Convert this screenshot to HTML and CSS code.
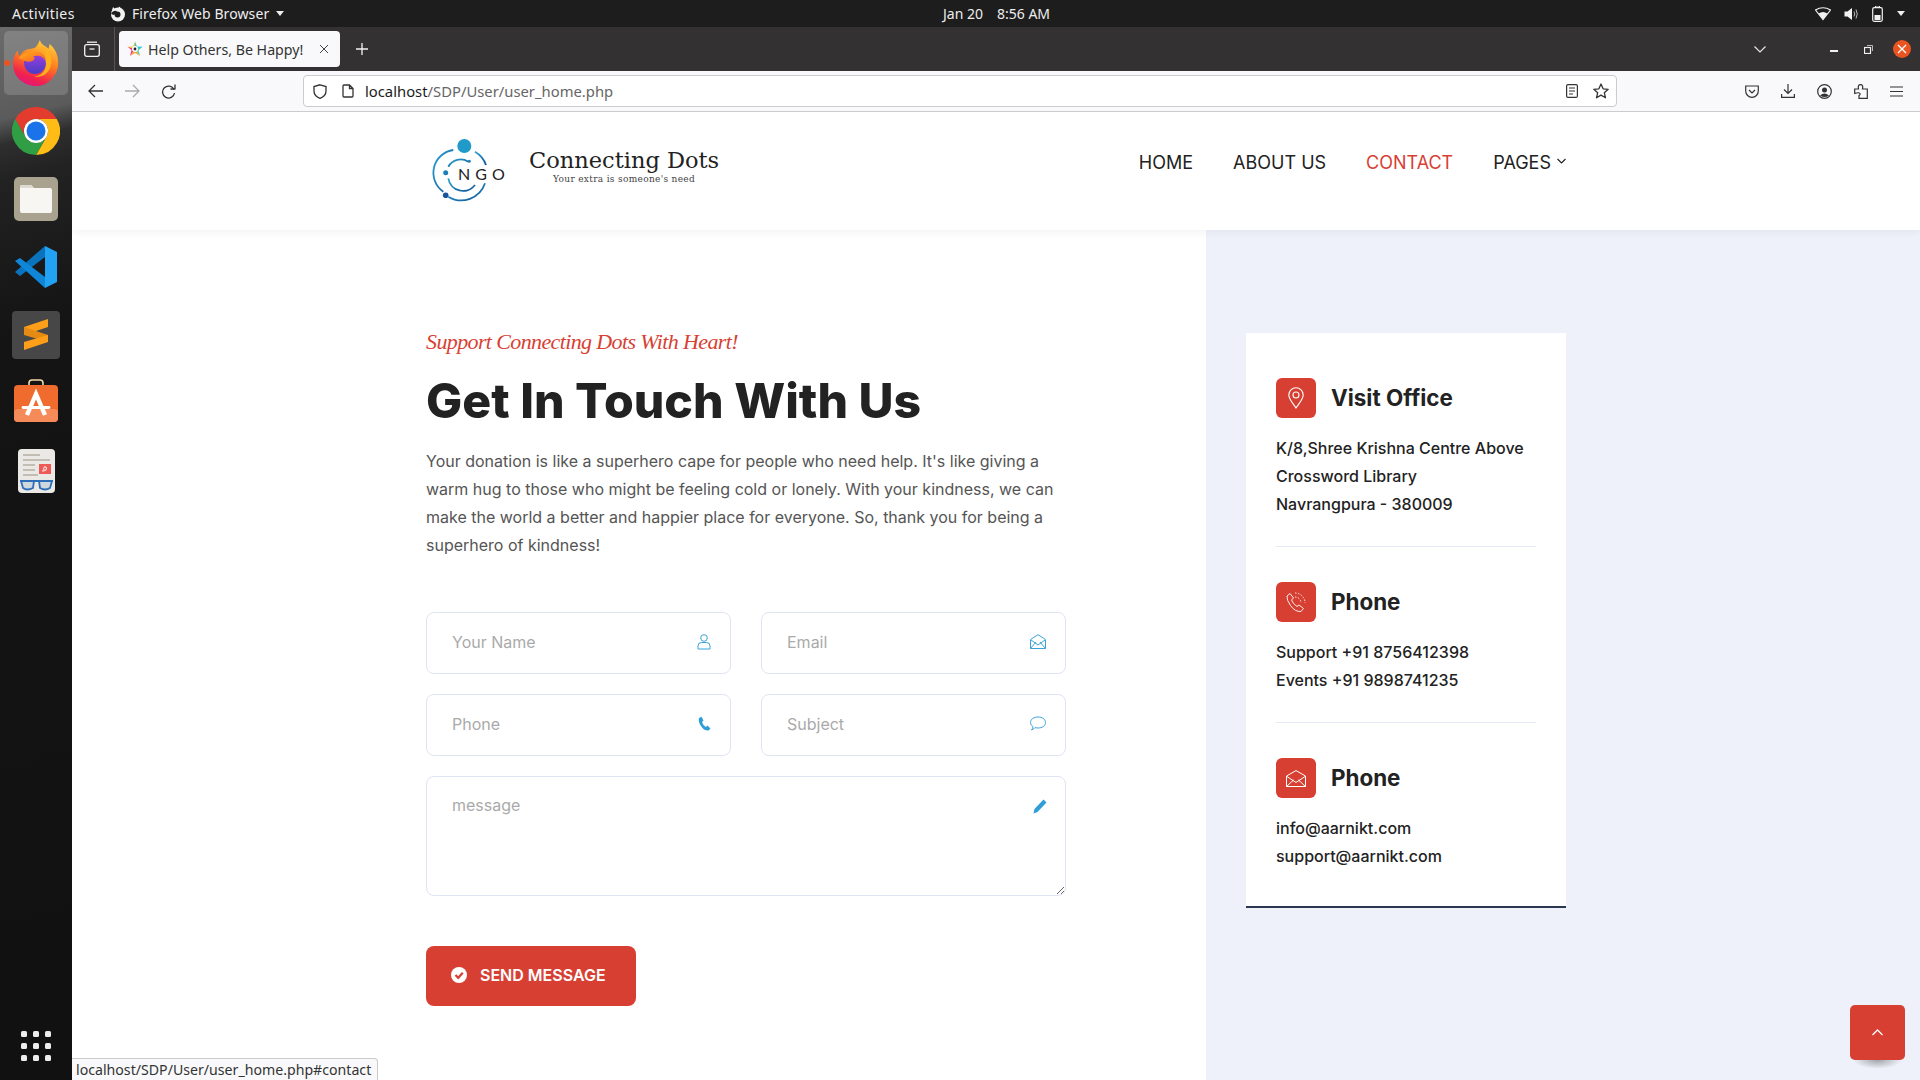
FILE: index.html
```html
<!DOCTYPE html>
<html lang="en">
<head>
<meta charset="utf-8">
<title>Help Others, Be Happy!</title>
<link rel="stylesheet" href="styles.css">
</head>
<body>
<div class="desktop">
  <div class="topbar">
    <div class="top-left">
      <span class="activities">Activities</span>
      <svg class="ff-mono" width="16" height="16" viewBox="0 0 16 16"><circle cx="8" cy="8.5" r="7" fill="#f2f2f2"/><circle cx="7.5" cy="8.5" r="3" fill="#1d1d1d"/><path d="M1.5 6 L5 3 L3 1 Z M9 0.5 L12 3 L8 4 Z" fill="#f2f2f2"/><path d="M1 8 Q3 4 7 5 L4 9 Z" fill="#1d1d1d"/></svg>
      <span class="appname">Firefox Web Browser</span>
      <span class="caret"></span>
    </div>
    <div class="clock"><span>Jan 20</span><span>8:56 AM</span></div>
    <div class="tray">
      <svg width="16" height="14" viewBox="0 0 16 14"><path d="M0.5 3 Q8 -1.5 15.5 3 L8 12.5 Z" fill="none" stroke="#f2f2f2" stroke-width="1.2"/><path d="M3.5 6.5 Q8 3.5 12.5 6.5 L8 12.5 Z" fill="#f2f2f2"/></svg>
      <svg width="15" height="14" viewBox="0 0 15 14"><path d="M0.5 4.5 H3.5 L8 1 V13 L3.5 9.5 H0.5 Z" fill="#f2f2f2"/><path d="M10 4.5 Q11.5 7 10 9.5 M12 2.5 Q14.5 7 12 11.5" stroke="#bbb" fill="none"/></svg>
      <svg width="11" height="16" viewBox="0 0 11 16"><path d="M3.5 1 V0 H7.5 V1" stroke="#f2f2f2"/><rect x="0.7" y="1.7" width="9.6" height="13.6" rx="1.5" fill="none" stroke="#f2f2f2" stroke-width="1.2"/><rect x="2.5" y="9" width="6" height="5" fill="#f2f2f2"/></svg>
      <span class="caret"></span>
    </div>
  </div>
  <div class="workspace">
    <nav class="dock">
      <div class="dock-item active">
        <span class="run-dot"></span>
        <svg width="46" height="46" viewBox="0 0 48 48"><defs><linearGradient id="ffa" x1="0.7" y1="0" x2="0.3" y2="1"><stop offset="0" stop-color="#ffd23a"/><stop offset=".45" stop-color="#ff7a1f"/><stop offset=".8" stop-color="#f0224e"/><stop offset="1" stop-color="#e3147e"/></linearGradient><linearGradient id="ffb" x1="0.5" y1="0" x2="0.5" y2="1"><stop offset="0" stop-color="#a33fe0"/><stop offset="1" stop-color="#4a3bc4"/></linearGradient><linearGradient id="ffc" x1="0" y1="0" x2="1" y2="1"><stop offset="0" stop-color="#ffb21e"/><stop offset="1" stop-color="#ff5a1f"/></linearGradient></defs><path d="M28 0 C29 4 33 6 37 9 C38 7 38 5 38 4 C44 9 48 17 47 26 C46 38 36 48 24 48 C11 48 0 38 0 25 C0 20 2 14 5 11 C5 14 6 16 7 17 C9 12 14 9 19 9 C22 9 25 8 28 0 Z" fill="url(#ffa)"/><circle cx="23" cy="24" r="11.5" fill="url(#ffb)"/><path d="M6 19 C9 14 15 13 22 12 C29 12 33 16 34 22 C30 16 26 16 21 17 C24 19 22 21 20 22 C16 24 12 22 6 19 Z" fill="url(#ffc)"/><path d="M34 22 C36 30 31 38 22 38 C30 40 41 34 40 20 C39 14 35 9 30 7 C34 11 34 17 34 22 Z" fill="#ffb21e"/></svg>
      </div>
      <div class="dock-item">
        <svg width="48" height="48" viewBox="0 0 48 48"><path d="M3.2 12 A24 24 0 0 1 44.8 12 H24 A12 12 0 0 0 13.6 30 Z" fill="#e33b2e"/><path d="M44.8 12 A24 24 0 0 1 24 48 L34.4 30 A12 12 0 0 0 24 12 Z" fill="#fdbd16"/><path d="M24 48 A24 24 0 0 1 3.2 12 L13.6 30 A12 12 0 0 0 34.4 30 Z" fill="#2f9e44"/><circle cx="24" cy="24" r="12" fill="#fff"/><circle cx="24" cy="24" r="9.5" fill="#1a73e8"/></svg>
      </div>
      <div class="dock-item">
        <svg width="44" height="44" viewBox="0 0 44 44"><rect width="44" height="44" rx="5" fill="#a8a28f"/><path d="M6 10 a2 2 0 0 1 2-2 H17 L20 11 H36 a2 2 0 0 1 2 2 V34 a2 2 0 0 1-2 2 H8 a2 2 0 0 1-2-2 Z" fill="#f8f6f3"/><path d="M6 10 a2 2 0 0 1 2-2 H17 L20 11 H6 Z" fill="#dedbd2"/></svg>
      </div>
      <div class="dock-item">
        <svg width="42" height="42" viewBox="0 0 42 42"><path d="M30 0 V11 L5 30 L0 26 Z" fill="#0a73bd"/><path d="M0 15 L5 12 L30 31 V42 Z" fill="#0f86d8"/><path d="M30 0 L42 6 V36 L30 42 Z" fill="#22a2f2"/></svg>
      </div>
      <div class="dock-item">
        <svg width="48" height="48" viewBox="0 0 48 48"><rect width="48" height="48" rx="4" fill="#474747"/><path d="M12 16 L36 8 V16 L12 24 Z" fill="#ff9e18"/><path d="M12 24 V16 L36 24 V31 Z" fill="#e58a12"/><path d="M12 31 L36 24 V31 L12 39 Z" fill="#ff9e18"/></svg>
      </div>
      <div class="dock-item">
        <svg class="store-icon" width="44" height="44" viewBox="0 0 44 44"><path d="M15 7 V4 a3 3 0 0 1 3-3 H26 a3 3 0 0 1 3 3 V7" fill="none" stroke="#f3d9a8" stroke-width="1.6"/><rect y="6" width="44" height="37" rx="4" fill="#ef6c2e"/><rect y="30" width="44" height="13" rx="4" fill="#f58b58"/><path d="M13 36 L22 15 L31 36" fill="none" stroke="#fff" stroke-width="4.4"/><path d="M9 28.500 H35" stroke="#fff" stroke-width="2.800" stroke-linecap="round"/></svg>
      </div>
      <div class="dock-item">
        <svg width="37" height="44" viewBox="0 0 37 44"><rect width="37" height="44" rx="4" fill="#ebe9e6"/><path d="M5 6 H22 M5 11 H32 M5 16 H17 M5 21 H17 M5 26 H20" stroke="#b5b0a4" stroke-width="1.6"/><rect x="21" y="15" width="12" height="10" fill="#ee5a55"/><path d="M24 22 Q30 22 28 18 Q25 17 26 21" stroke="#fff" fill="none"/><path d="M2 32 H35" stroke="#2c6fb8" stroke-width="2"/><path d="M3 32 H16 L15 39 Q9 42 5 39 Z M21 32 H34 L32 39 Q27 42 22 39 Z" fill="#cfd8de" stroke="#2c6fb8" stroke-width="1.8"/></svg>
      </div>
      <div class="apps-grid">
        <i></i><i></i><i></i><i></i><i></i><i></i><i></i><i></i><i></i>
      </div>
    </nav>
    <div class="browser">
      <div class="tabbar">
        <svg class="tab-all" width="16" height="16" viewBox="0 0 16 16" fill="none" stroke="#f4f4f4" stroke-width="1.3"><path d="M3 1.2 H13"/><rect x="0.7" y="3.7" width="14.6" height="11.6" rx="2"/><path d="M5.5 8 H10.5"/></svg>
        <span class="tab-sep"></span>
        <div class="tab">
          <svg width="16" height="16" viewBox="0 0 16 16"><path d="M8 0.5 L10 5.5 L15.5 5.7 L11.500 9 L8 8 Z" fill="#2bc4ea"/><path d="M15.500 5.700 L11.500 9 L13 15 L8 8 Z" fill="#3fd0b0"/><path d="M13 15 L8 12 L3 15 L8 8 Z" fill="#f2a93a"/><path d="M3 15 L4.500 9 L.5 5.700 L8 8 Z" fill="#f0327e"/><path d="M.5 5.700 L6 5.500 L8 .5 L8 8 Z" fill="#f5c21c"/><circle cx="8" cy="8" r="3" fill="#fff"/><circle cx="8" cy="8" r="1.400" fill="#222"/></svg>
          <span class="tab-title">Help Others, Be Happy!</span>
          <svg class="tab-x" width="10" height="10" viewBox="0 0 10 10" stroke="#444" stroke-width="1"><path d="M1 1 L9 9 M9 1 L1 9"/></svg>
        </div>
        <svg class="tab-new" width="12" height="12" viewBox="0 0 12 12" stroke="#f4f4f4" stroke-width="1.300"><path d="M6 0 V12 M0 6 H12"/></svg>
        <svg class="tab-list" width="12" height="7" viewBox="0 0 12 7" fill="none" stroke="#e8e8e8" stroke-width="1.200"><path d="M.5 .5 L6 6 L11.500 .5"/></svg>
        <span class="win-min"></span>
        <svg class="win-max" width="9" height="9" viewBox="0 0 9 9" fill="none" stroke="#f2f2f2"><rect x=".5" y="2.500" width="6" height="6" stroke-width="1.200"/><path d="M3 .5 H8.500 V6" stroke-width=".7"/></svg>
        <span class="win-close"><svg width="10" height="10" viewBox="0 0 10 10" stroke="#fff" stroke-width="1.300"><path d="M1 1 L9 9 M9 1 L1 9"/></svg></span>
      </div>
      <div class="toolbar">
        <svg class="tool back" width="16" height="14" viewBox="0 0 16 14" fill="none" stroke="#333" stroke-width="1.300"><path d="M15 7 H1.500 M7 1 L1 7 L7 13"/></svg>
        <svg class="tool fwd" width="16" height="14" viewBox="0 0 16 14" fill="none" stroke="#aaa" stroke-width="1.300"><path d="M1 7 H14.500 M9 1 L15 7 L9 13"/></svg>
        <svg class="tool reload" width="15" height="15" viewBox="0 0 15 15" fill="none" stroke="#333" stroke-width="1.300"><path d="M13 5.500 A6 6 0 1 0 13.500 9"/><path d="M9.500 5 H14 V.5" stroke-linejoin="round"/></svg>
        <div class="urlbar">
          <svg width="14" height="15" viewBox="0 0 14 15" fill="none" stroke="#333" stroke-width="1.300"><path d="M7 .8 L13 2.500 V7 Q13 12 7 14.300 Q1 12 1 7 V2.500 Z"/></svg>
          <svg class="url-page" width="12" height="14" viewBox="0 0 12 14" fill="none" stroke="#333" stroke-width="1.300"><path d="M1 2 a1 1 0 0 1 1-1 H7.500 L11 4.500 V12 a1 1 0 0 1-1 1 H2 a1 1 0 0 1-1-1 Z M7.500 1 V4.500 H11"/></svg>
          <span class="url-text"><b>localhost</b>/SDP/User/user_home.php</span>
          <svg class="url-reader" width="12" height="14" viewBox="0 0 12 14" fill="none" stroke="#333" stroke-width="1.200"><rect x=".6" y=".6" width="10.800" height="12.800" rx="1.500"/><path d="M3 4 H9 M3 7 H9 M3 10 H7"/></svg>
          <svg class="url-star" width="16" height="16" viewBox="0 0 16 16" fill="none" stroke="#333" stroke-width="1.300"><path d="M8 1 L10.100 5.800 L15.200 6.300 L11.300 9.700 L12.500 14.800 L8 12.100 L3.500 14.800 L4.700 9.700 L.8 6.300 L5.900 5.800 Z" stroke-linejoin="round"/></svg>
        </div>
        <div class="tool-right">
          <svg width="14" height="13" viewBox="0 0 14 13" fill="none" stroke="#333" stroke-width="1.200"><path d="M.7 1 H13.300 V6 A6.300 6.300 0 0 1 .7 6 Z"/><path d="M4 5 L7 8 L10 5"/></svg>
          <svg width="14" height="14" viewBox="0 0 14 14" fill="none" stroke="#333" stroke-width="1.200"><path d="M7 0 V9 M3 5.500 L7 9.500 L11 5.500 M.6 10 V13.300 H13.400 V10"/></svg>
          <svg width="15" height="15" viewBox="0 0 15 15"><circle cx="7.500" cy="7.500" r="6.800" fill="none" stroke="#333" stroke-width="1.200"/><circle cx="7.500" cy="6" r="2.500" fill="#333"/><path d="M3 11.500 Q7.500 7.500 12 11.500 Q7.500 14.500 3 11.500 Z" fill="#333"/></svg>
          <svg width="14" height="15" viewBox="0 0 14 15" fill="none" stroke="#333" stroke-width="1.200"><path d="M.7 5 H4.500 Q3.500 .7 6.500 .7 Q9.500 .7 8.500 5 H13.300 V14.300 H5 V11.500 Q6.500 11 6 9.500 Q5 8 .7 9.500 Z"/></svg>
          <svg width="13" height="11" viewBox="0 0 13 11" stroke="#333" stroke-width="1.200"><path d="M0 1 H13 M0 5.500 H13 M0 10 H13"/></svg>
        </div>
      </div>
      <main class="page">
        <header class="site-header">
          <div class="container head-row">
            <a class="brand">
              <svg class="brand-mark" width="80" height="66" viewBox="0 0 80 66" fill="none">
                <defs><linearGradient id="ngo" x1="0" y1="0" x2="1" y2="1"><stop offset="0" stop-color="#2aa5d2"/><stop offset="1" stop-color="#12539a"/></linearGradient></defs>
                <g stroke="url(#ngo)" stroke-width="1.800">
                  <path d="M21.300 12 A23 23 0 0 0 11.300 53.700"/>
                  <path d="M16.300 58.700 A25 25 0 0 0 53 45.300"/>
                  <path d="M43 13.700 A25 25 0 0 1 54 27"/>
                  <path d="M36.300 23.700 A14 14 0 0 0 16.300 28.700"/>
                  <path d="M16.300 40.300 A15 15 0 0 0 43 47"/>
                </g>
                <circle cx="32.300" cy="8" r="7" fill="#1f9ac9"/>
                <circle cx="13.700" cy="57.300" r="2.800" fill="#16549c"/>
                <circle cx="13.700" cy="34.700" r="2.500" fill="#1d7fb8"/>
                <circle cx="37.300" cy="23.300" r="1.500" fill="#1d7fb8"/>
                <text class="ngo-text" x="26" y="42">NGO</text>
              </svg>
              <span class="brand-text">
                <span class="brand-name">Connecting Dots</span>
                <span class="brand-tag">Your extra is someone's need</span>
              </span>
            </a>
            <ul class="nav">
              <li>HOME</li>
              <li>ABOUT US</li>
              <li class="current">CONTACT</li>
              <li class="has-sub">PAGES<svg width="9" height="6" viewBox="0 0 9 6" fill="none" stroke="#222" stroke-width="1.200"><path d="M.5 1 L4.500 5 L8.500 1"/></svg></li>
            </ul>
          </div>
        </header>
        <section class="contact">
          <div class="contact-main">
            <p class="eyebrow">Support Connecting Dots With Heart!</p>
            <h1 class="title">Get In Touch With Us</h1>
            <p class="lead">Your donation is like a superhero cape for people who need help. It's like giving a warm hug to those who might be feeling cold or lonely. With your kindness, we can make the world a better and happier place for everyone. So, thank you for being a superhero of kindness!</p>
            <form class="form">
              <label class="field"><input type="text" placeholder="Your Name">
                <svg class="field-icon" width="14" height="16" viewBox="0 0 14 16" fill="none" stroke="#3ba3d8" stroke-width="1"><circle cx="7" cy="4" r="3.300"/><path d="M1 15 V12 a3.500 3.500 0 0 1 3.500-3.500 H9.500 a3.500 3.500 0 0 1 3.500 3.500 V15 Z"/></svg></label>
              <label class="field"><input type="text" placeholder="Email">
                <svg class="field-icon" width="16" height="15" viewBox="0 0 16 15" fill="none" stroke="#3ba3d8" stroke-width="1"><path d="M.5 5.500 L8 .7 L15.500 5.500 V14.500 H.5 Z"/><path d="M.5 14.500 L6 8 M15.500 14.500 L10 8 M1 6 L8 11 L15 6"/></svg></label>
              <label class="field"><input type="text" placeholder="Phone">
                <svg class="field-icon" width="13" height="15" viewBox="0 0 13 15"><path d="M1 2 L3.500 .8 L5.500 4.500 L4 6 Q5 9.500 7.800 11 L9.500 9.500 L12.500 12.500 L10.500 14.500 Q6 15 3 10 Q0 6 1 2 Z" fill="#2f9ed6"/></svg></label>
              <label class="field"><input type="text" placeholder="Subject">
                <svg class="field-icon" width="16" height="15" viewBox="0 0 16 15" fill="none" stroke="#3ba3d8" stroke-width="1"><path d="M8 1 C12 1 15.500 3 15.500 6.500 C15.500 10 12 12 8 12 Q6 12 5 11.500 Q3.500 13.500 1.500 14 Q3 12.500 2.800 10.500 Q.5 9 .5 6.500 C.5 3 4 1 8 1 Z"/></svg></label>
              <label class="field wide"><textarea placeholder="message"></textarea>
                <svg class="field-icon pencil" width="14" height="15" viewBox="0 0 14 15"><path d="M10.500 .5 L13.500 3.500 L4.500 13 L.5 14.500 L1.500 10 Z" fill="#2f9ed6"/></svg></label>
              <button class="send" type="button">
                <svg width="16" height="16" viewBox="0 0 16 16"><circle cx="8" cy="8" r="8" fill="#fff"/><path d="M4.500 8 L7.200 10.800 L11.800 5.700" fill="none" stroke="#d83f33" stroke-width="2.200"/></svg>
                SEND MESSAGE
              </button>
            </form>
          </div>
          <aside class="contact-side">
            <div class="info-card">
              <div class="info-block">
                <div class="info-head">
                  <span class="info-icon"><svg width="16" height="22" viewBox="0 0 16 22" fill="none" stroke="#fff" stroke-width="1.100"><path d="M8 21 C4 15 .8 12 .8 8 A7.200 7.200 0 0 1 15.200 8 C15.200 12 12 15 8 21 Z"/><circle cx="8" cy="8" r="3"/></svg></span>
                  <h3>Visit Office</h3>
                </div>
                <p>K/8,Shree Krishna Centre Above<br>Crossword Library<br>Navrangpura - 380009</p>
              </div>
              <div class="info-block">
                <div class="info-head">
                  <span class="info-icon"><svg width="20" height="21" viewBox="0 0 20 21" fill="none" stroke="#fff" stroke-width=".9"><path d="M1 4 L4 1.500 L7.500 6 L5.500 8 Q7 12 11 14.500 L13 13 L17.500 16.500 L15 19.500 Q9 20 4.500 13.500 Q.5 8 1 4 Z"/><path d="M9 1 A10 10 0 0 1 19 11 M9 5 A6 6 0 0 1 15 11" stroke-dasharray="1.500 1.500"/></svg></span>
                  <h3>Phone</h3>
                </div>
                <p>Support +91 8756412398<br>Events +91 9898741235</p>
              </div>
              <div class="info-block">
                <div class="info-head">
                  <span class="info-icon"><svg width="20" height="17" viewBox="0 0 20 17" fill="none" stroke="#fff" stroke-width="1"><path d="M.5 6 L10 .6 L19.500 6 V16.500 H.5 Z"/><path d="M.5 16.500 L7.500 10 M19.500 16.500 L12.500 10 M1 6.500 L10 12.500 L19 6.500"/></svg></span>
                  <h3>Phone</h3>
                </div>
                <p>info@aarnikt.com<br>support@aarnikt.com</p>
              </div>
            </div>
          </aside>
        </section>
        <a class="to-top"><svg width="11" height="7" viewBox="0 0 11 7" fill="none" stroke="#fff" stroke-width="1.300"><path d="M.5 6 L5.500 1 L10.500 6"/></svg></a>
        <div class="status">localhost/SDP/User/user_home.php#contact</div>
      </main>
    </div>
  </div>
</div>
</body>
</html>
```
FILE: styles.css
```css
* { box-sizing: border-box; }
html, body { margin: 0; padding: 0; height: 100%; overflow: hidden; }
body { font-family: Inter, "Liberation Sans", sans-serif; color: #222; background: #fff; }
.desktop { width: 1920px; height: 1080px; display: flex; flex-direction: column; overflow: hidden; }

/* GNOME top bar */
.topbar { height: 27px; flex: none; background: #1d1d1d; color: #eee; font: 14px/27px "Noto Sans", sans-serif; display: grid; grid-template-columns: 943px auto 1fr; align-items: center; }
.top-left { display: flex; align-items: center; padding-left: 12px; }
.activities { width: 98px; letter-spacing: .45px; }
.ff-mono { margin-right: 6px; }
.appname { letter-spacing: .1px; }
.caret { width: 0; height: 0; border: 4.5px solid transparent; border-top: 5px solid #eee; border-bottom: 0; margin-left: 7px; }
.clock { display: flex; gap: 14px; font-size: 14px; }
.tray { display: flex; align-items: center; justify-content: flex-end; gap: 13px; padding-right: 15px; }
.tray .caret { margin-left: 1px; }

.workspace { flex: 1; display: flex; min-height: 0; }

/* Dock */
.dock { width: 72px; flex: none; display: flex; flex-direction: column; align-items: center; padding-top: 4px; gap: 4px; background: linear-gradient(166deg, #6b6b6b 0, #5b5b5b 90px, #444 103px, #2e2e2e 115px, #222 150px, #141414 300px, #111 100%); }
.dock-item { width: 64px; height: 64px; flex: none; display: flex; align-items: center; justify-content: center; position: relative; border-radius: 5px; }
.dock-item.active { background: rgba(255,255,255,.16); }
.store-icon { margin-top: -4px; }
.run-dot { position: absolute; left: 0; top: 29px; width: 6px; height: 6px; border-radius: 50%; background: #e95420; }
.apps-grid { margin-top: auto; margin-bottom: 19px; display: grid; grid-template-columns: repeat(3, 6px); gap: 6px; }
.apps-grid i { width: 6px; height: 6px; border-radius: 1.5px; background: #eee; }

/* Browser chrome */
.browser { flex: 1; min-width: 0; display: flex; flex-direction: column; }
.tabbar { height: 44px; flex: none; background: #333132; display: flex; align-items: center; padding: 0 9px 0 12px; }
.tab-sep { width: 1px; height: 44px; background: #555; margin: 0 4px 0 14px; }
.tab { width: 221px; height: 36px; background: #f9f9fb; border-radius: 4px; display: flex; align-items: center; padding: 0 11px 0 8px; color: #333; font: 14.2px "Noto Sans", sans-serif; }
.tab-title { margin-left: 5px; flex: 1; white-space: nowrap; }
.tab-new { margin-left: 16px; }
.tab-list { margin-left: auto; margin-right: 64px; }
.win-min { width: 8px; height: 1.5px; background: #f2f2f2; margin-top: 4px; margin-right: 26px; }
.win-max { margin-right: 20px; }
.win-close { width: 18px; height: 18px; border-radius: 50%; background: #e95420; display: flex; align-items: center; justify-content: center; }

.toolbar { height: 41px; flex: none; background: #f9f9fb; border-bottom: 1px solid #ccc; display: flex; align-items: center; padding-left: 16px; }
.tool.fwd { margin-left: 20px; }
.tool.reload { margin-left: 21px; }
.urlbar { width: 1314px; height: 32px; margin-left: 127px; background: #fff; border: 1px solid #ccc; border-radius: 4px; display: flex; align-items: center; padding: 0 7px 0 9px; font: 14.8px "Noto Sans", sans-serif; color: #666; }
.url-page { margin-left: 15px; }
.url-text { margin-left: 11px; flex: 1; white-space: nowrap; }
.url-text b { font-weight: 400; color: #1c1b22; }
.url-star { margin-left: 15px; }
.tool-right { display: flex; align-items: center; gap: 22px; margin-left: 0; padding-left: 128px; }

/* Page */
.page { flex: 1; position: relative; background: #fff; min-height: 0; overflow: hidden; }
.site-header { height: 118px; background: #fff; box-shadow: 0 2px 8px rgba(30,40,80,.06); position: relative; }
.container { width: 1140px; margin: 0 auto; }
.head-row { display: flex; justify-content: space-between; padding-top: 26px; }
.brand { display: flex; margin-left: 6px; }
.brand-mark { overflow: visible; }
.ngo-text { font: 400 16px Lato, sans-serif; letter-spacing: 5px; fill: #222; }
.brand-text { display: flex; flex-direction: column; align-items: center; margin-left: 17px; margin-top: 8px; }
.brand-name { font: 400 22.5px/28px "DejaVu Serif", serif; color: #222; white-space: nowrap; }
.brand-tag { font: 400 9px/10px "DejaVu Serif", serif; color: #444; letter-spacing: .32px; white-space: nowrap; }
.nav { list-style: none; margin: 0; padding: 0; display: flex; gap: 40px; font-size: 18px; line-height: 36px; height: 36px; margin-top: 7px; }
.nav .current { color: #d83f33; }
.has-sub { display: flex; align-items: flex-start; gap: 6px; }
.has-sub svg { margin-top: 13px; }

.contact { display: grid; grid-template-columns: 1134px 1fr; height: 850px; }
.contact-main { padding: 97px 0 0 354px; }
.contact-side { background: #eef1f9; padding: 103px 0 0 40px; }
.eyebrow { margin: 0; width: 640px; font: italic 400 22px/30px "Liberation Serif", serif; letter-spacing: -.62px; color: #d83f33; }
.title { margin: 14px 0 0; font-size: 48.2px; line-height: 60px; font-weight: 800; color: #222; white-space: nowrap; }
.lead { margin: 16px 0 0; width: 640px; font-size: 16px; line-height: 28px; color: #555; }
.form { width: 640px; margin-top: 53px; display: grid; grid-template-columns: 305px 305px; gap: 20px 30px; }
.field { position: relative; display: block; }
.field.wide { grid-column: 1 / -1; }
.field input, .field textarea { width: 100%; display: block; border: 1px solid #dfe4f3; border-radius: 8px; background: #fff; font: 16px Inter, sans-serif; color: #222; padding: 0 25px; outline: none; }
.field input { height: 62px; padding-bottom: 2px; }
.field textarea { height: 120px; padding-top: 18px; }
.field input::placeholder, .field textarea::placeholder { color: #aaa; opacity: 1; }
.field-icon { position: absolute; right: 20px; top: 22px; }
.field-icon.pencil { right: 19px; top: 23px; }
.send { grid-column: 1 / -1; margin-top: 30px; width: 210px; height: 60px; border: 0; border-radius: 8px; background: #d83f33; color: #fff; font: 600 16px Inter, sans-serif; display: flex; align-items: center; gap: 13px; padding: 0 0 2px 25px; white-space: nowrap; }

.info-card { width: 320px; height: 575px; background: #fff; border-bottom: 2px solid #2b3650; padding: 45px 30px 0; }
.info-block + .info-block { border-top: 1px solid #e6eaf5; margin-top: 28px; padding-top: 35px; }
.info-head { display: flex; align-items: center; gap: 15px; }
.info-icon { width: 40px; height: 40px; flex: none; background: #d83f33; border-radius: 6px; display: flex; align-items: center; justify-content: center; }
.info-head h3 { margin: 0 0 2px; font-size: 22.4px; font-weight: 700; color: #222; }
.info-block p { margin: 16px 0 0; font-size: 16px; line-height: 28px; font-weight: 500; color: #222; white-space: nowrap; }

.to-top { position: absolute; left: 1778px; top: 893px; width: 55px; height: 55px; border-radius: 5px; background: #d83f33; display: flex; align-items: center; justify-content: center; }
.to-top::after { content: ""; position: absolute; left: 3px; right: 3px; bottom: -9px; height: 9px; background: radial-gradient(ellipse at center top, rgba(0,0,0,.32), rgba(0,0,0,0) 70%); }
.status { position: absolute; left: 0; bottom: 0; height: 22px; padding: 0 6px 0 4px; background: #f9f9fb; border: 1px solid #ccc; border-left: 0; border-bottom: 0; border-top-right-radius: 4px; font: 14.15px/21px "Noto Sans", sans-serif; color: #333; white-space: nowrap; }
```
